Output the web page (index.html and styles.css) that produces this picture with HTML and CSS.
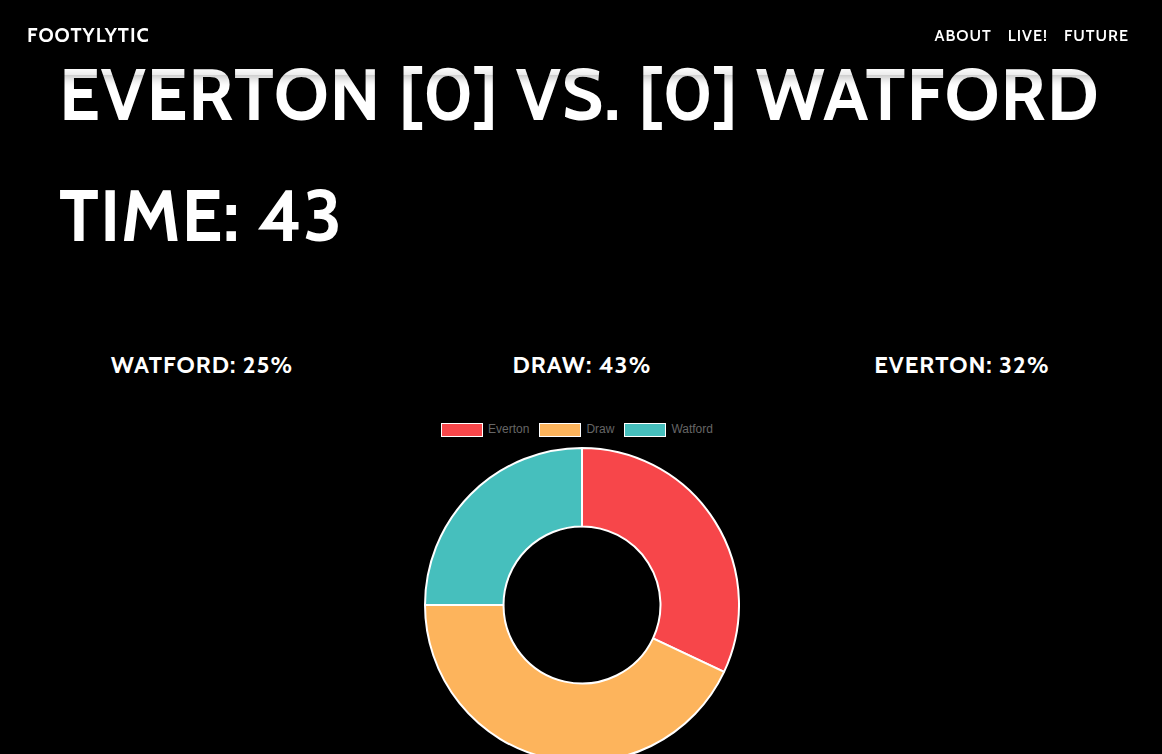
FILE: index.html
```html
<!DOCTYPE html>
<html lang="en">
<head>
<meta charset="utf-8">
<meta name="viewport" content="width=device-width, initial-scale=1">
<title>Footylytic</title>
<link rel="stylesheet" href="styles.css">
</head>
<body>
<nav class="navbar">
  <a class="brand" href="#top">Footylytic</a>
  <div class="nav-links">
    <a href="#about">About</a>
    <a href="#live">Live!</a>
    <a href="#future">Future</a>
  </div>
</nav>
<main class="match" id="live">
  <h1 class="headline">Everton [0] vs. [0] Watford</h1>
  <h1 class="headline">Time: 43</h1>
  <div class="odds">
    <h3>Watford: 25%</h3>
    <h3>Draw: 43%</h3>
    <h3>Everton: 32%</h3>
  </div>
  <figure class="chart">
    <figcaption class="legend">
      <span class="key"><i class="swatch everton"></i>Everton</span>
      <span class="key"><i class="swatch draw"></i>Draw</span>
      <span class="key"><i class="swatch watford"></i>Watford</span>
    </figcaption>
    <svg class="donut" viewBox="-158 -158 316 316" role="img" aria-label="Everton 32%, Draw 43%, Watford 25%">
      <path class="everton" d="M0-157A157 157 0 0 1 142.06 66.85L71.03 33.42A78.5 78.5 0 0 0 0-78.5Z"/>
      <path class="draw" d="M142.06 66.85A157 157 0 0 1-157 0L-78.5 0A78.5 78.5 0 0 0 71.03 33.42Z"/>
      <path class="watford" d="M-157 0A157 157 0 0 1 0-157L0-78.5A78.5 78.5 0 0 0-78.5 0Z"/>
    </svg>
  </figure>
</main>
</body>
</html>
```
FILE: styles.css
```css
* { box-sizing: border-box; }

body {
  margin: 0;
  overflow: hidden;
  background: #000;
  color: #fff;
  font-family: Cabin, Lato, "Open Sans", sans-serif;
}

.navbar {
  position: fixed;
  inset: 0 0 auto;
  z-index: 1;
  display: flex;
  align-items: center;
  justify-content: space-between;
  height: 75px;
  padding: 0 33px 5px 27px;
  box-shadow: 0 2px 10px rgba(0, 0, 0, 0.3), inset 0 -2px 10px rgba(0, 0, 0, 0.12);
  text-transform: uppercase;
  font-weight: 700;
  letter-spacing: 1px;
}

.navbar a {
  color: #fff;
  text-decoration: none;
}

.brand { font-size: 20px; }

.nav-links {
  display: flex;
  gap: 16px;
  font-size: 16px;
  font-weight: 600;
}

.match { padding: 52px 0 0; }

h1, h3 {
  margin: 0;
  text-transform: uppercase;
  font-weight: 700;
  letter-spacing: 1px;
}

.headline {
  padding: 0 59px;
  margin-bottom: 35px;
  font-size: 72px;
  line-height: 86px;
  white-space: nowrap;
}

.odds {
  display: grid;
  grid-template-columns: repeat(3, 1fr);
  padding: 57px 10px 0 12px;
  text-align: center;
}

.odds h3 {
  font-size: 24px;
  line-height: 28px;
}

.chart {
  display: flex;
  flex-direction: column;
  align-items: center;
  gap: 10px;
  margin: 44px 0 0;
  padding-left: 2px;
}

.legend {
  display: flex;
  gap: 10px;
  margin-right: 10px;
  color: #666;
  font: 12px/12px "Liberation Sans", Arial, sans-serif;
}

.key {
  display: flex;
  gap: 5px;
}

.swatch {
  width: 42px;
  height: 14px;
  border: 1px solid #fff;
}

.swatch.everton { background: #f7464a; }
.swatch.draw { background: #fdb45c; }
.swatch.watford { background: #46bfbd; }

.donut {
  width: 316px;
  height: 316px;
  stroke: #fff;
  stroke-width: 2;
  stroke-linejoin: bevel;
}

.donut .everton { fill: #f7464a; }
.donut .draw { fill: #fdb45c; }
.donut .watford { fill: #46bfbd; }
```
